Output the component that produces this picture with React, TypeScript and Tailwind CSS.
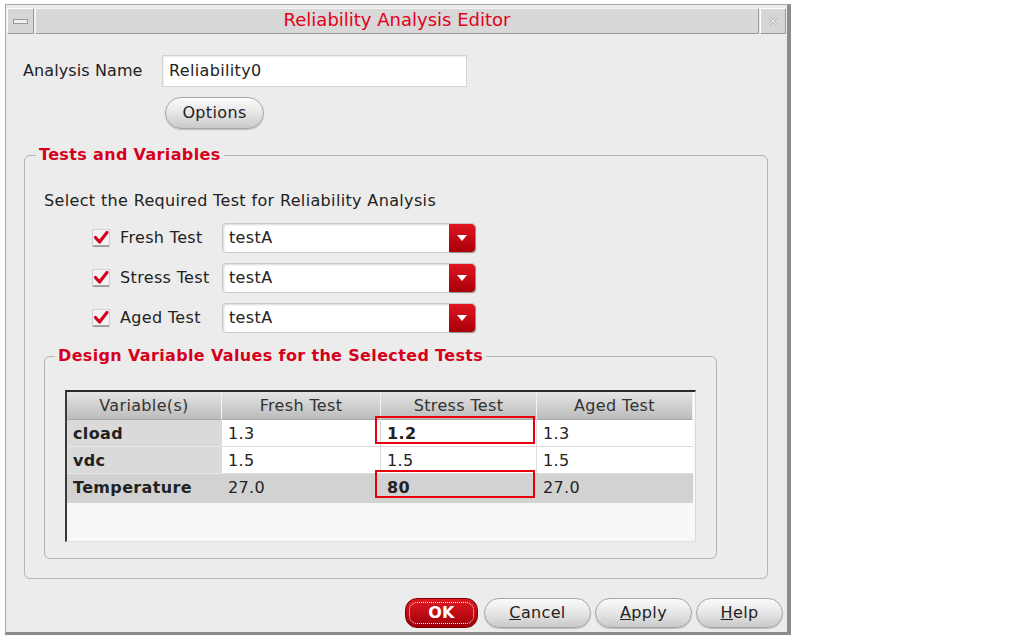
import type { ReactNode } from 'react'

const rows = [
  { name: 'cload', fresh: '1.3', stress: '1.2', aged: '1.3', boxed: true, shaded: false },
  { name: 'vdc', fresh: '1.5', stress: '1.5', aged: '1.5', boxed: false, shaded: false },
  { name: 'Temperature', fresh: '27.0', stress: '80', aged: '27.0', boxed: true, shaded: true },
]

function CheckBox() {
  return (
    <svg width="18" height="18" viewBox="0 0 18 18" className="shrink-0">
      <rect x="0.5" y="0.5" width="17" height="17" fill="#f4f4f4" stroke="#d0d0d0" />
      <line x1="1" y1="17" x2="17" y2="17" stroke="#8c8c8c" strokeWidth="1.5" />
      <path d="M3.5 8.5 L7.5 13 L15 3.5" fill="none" stroke="#d4001c" strokeWidth="3.2" strokeLinecap="round" strokeLinejoin="round" />
    </svg>
  )
}

function Combo({ value }: { value: string }) {
  return (
    <div className="flex h-[30px] w-[254px] rounded-[4px] border border-[#c8c8c8] bg-white shadow-[inset_1px_1px_2px_rgba(0,0,0,0.15)]">
      <span className="flex-1 pl-[6px] leading-[28px]">{value}</span>
      <span className="flex w-[26px] items-center justify-center rounded-r-[4px] bg-linear-to-b from-[#e0151f] to-[#a80008] shadow-[1px_1px_1px_rgba(0,0,0,0.3)]">
        <svg width="12" height="8" viewBox="0 0 12 8">
          <path d="M1 1 L11 1 L6 7 Z" fill="#fff" />
        </svg>
      </span>
    </div>
  )
}

function TestRow({ label }: { label: string }) {
  return (
    <div className="flex h-[30px] items-center">
      <div className="ml-[48px] flex w-[130px] items-center">
        <CheckBox />
        <span className="ml-[10px]">{label}</span>
      </div>
      <Combo value="testA" />
    </div>
  )
}

function Pill({ children, w, h = 'h-[30px]', red }: { children: ReactNode; w: string; h?: string; red?: boolean }) {
  if (red) {
    return (
      <button className={`${w} ${h} flex items-center justify-center rounded-[12px] border border-[#7a0000] bg-linear-to-b from-[#e01820] to-[#a00008] p-[3px]`}>
        <span className="flex h-full w-full items-center justify-center rounded-[8px] border border-dotted border-white font-bold text-white">
          {children}
        </span>
      </button>
    )
  }
  return (
    <button className={`${w} ${h} rounded-full border border-[#a6a6a6] bg-linear-to-b from-[#fbfbfb] via-[#e6e6e6] to-[#c9c9c9] text-[#222] shadow-[0_1px_1px_rgba(0,0,0,0.2)]`}>
      {children}
    </button>
  )
}

function Cell({ children, className }: { children?: ReactNode; className?: string }) {
  return <div className={`relative h-[27px] truncate px-[6px] leading-[27px] ${className ?? ''}`}>{children}</div>
}

export default function App() {
  return (
    <div className="h-[636px] w-[1013px] bg-white pl-[5px] pt-[4px] font-['DejaVu_Sans',sans-serif] text-[16px] tracking-[0.35px] text-[#222]">
      <div className="flex h-[631px] w-[786px] flex-col border-l border-t border-[#a8a8a8] border-r-[4px] border-b-[3px] border-r-[#8c8c8c] border-b-[#8c8c8c] bg-[#ececec]">
        {/* title bar */}
        <div className="mx-[1px] mt-[3px] flex h-[26px]">
          <div className="flex w-[27px] items-center justify-center border border-t-white border-l-white border-r-[#9a9a9a] border-b-[#9a9a9a] bg-[#d6d6d6]">
            <span className="h-[5px] w-[15px] border border-[#9a9a9a] bg-[#f0f0f0]" />
          </div>
          <div className="ml-[1px] flex flex-1 items-center justify-center border border-t-[#f4f4f4] border-l-[#f4f4f4] border-r-[#9a9a9a] border-b-[#9a9a9a] bg-[#d8d8d8] pb-[3px] text-[18px] tracking-normal text-[#e3001b]">
            Reliability Analysis Editor
          </div>
          <div className="ml-[1px] flex w-[26px] items-center justify-center border border-t-white border-l-white border-r-[#9a9a9a] border-b-[#9a9a9a] bg-[#d6d6d6]">
            <svg width="14" height="14" viewBox="0 0 14 14">
              <path d="M2 2 L12 12 M12 2 L2 12" stroke="#c4c4c4" strokeWidth="3" />
              <path d="M2 2 L12 12 M12 2 L2 12" stroke="#eaeaea" strokeWidth="1" />
            </svg>
          </div>
        </div>

        {/* name */}
        <div className="mt-[21px] flex items-center">
          <span className="ml-[17px] w-[139px] tracking-[0.1px]">Analysis Name</span>
          <div className="h-[32px] w-[305px] border border-[#d4d4d4] bg-white pl-[6px] leading-[30px] shadow-[inset_1px_1px_1px_rgba(0,0,0,0.08)]">
            Reliability0
          </div>
        </div>
        <div className="ml-[159px] mt-[10px]">
          <Pill w="w-[99px]" h="h-[32px]">
            Options
          </Pill>
        </div>

        {/* tests and variables */}
        <fieldset className="ml-[18px] mr-[19px] mt-[16px] rounded-[6px] border border-[#b4b4b4] pb-[19px] pl-[19px] pr-[50px]">
          <legend className="-ml-[8px] px-[3px] text-[16px] font-bold leading-[20px] text-[#d6001c]">Tests and Variables</legend>
          <div className="mt-[26px] leading-[20px]">Select the Required Test for Reliability Analysis</div>
          <div className="mt-[12px] flex flex-col gap-[10px]">
            <TestRow label="Fresh Test" />
            <TestRow label="Stress Test" />
            <TestRow label="Aged Test" />
          </div>

          <fieldset className="mt-[13px] w-[673px] rounded-[6px] border border-[#b4b4b4] px-[20px] pb-[16px]">
            <legend className="-ml-[10px] px-[3px] text-[16px] font-bold leading-[20px] text-[#d6001c]">
              Design Variable Values for the Selected Tests
            </legend>
            <div className="mt-[24px] h-[152px] w-[631px] border-l-2 border-t-2 border-l-[#3a3a3a] border-t-[#2a2a2a] border-r border-b border-r-[#d8d8d8] border-b-[#e0e0e0] bg-[#f8f8f8]">
              <div className="grid grid-cols-[155px_159px_156px_156px]">
                {['Variable(s)', 'Fresh Test', 'Stress Test', 'Aged Test'].map((h) => (
                  <div
                    key={h}
                    className="h-[28px] border-r border-b border-r-[#f2f2f2] border-b-[#a8a8a8] bg-linear-to-b from-[#e4e4e4] to-[#bcbcbc] text-center leading-[27px] text-[#333]"
                  >
                    {h}
                  </div>
                ))}
                {rows.map((r) => (
                  <div key={r.name} className="contents">
                    <Cell className={`font-bold ${r.shaded ? 'h-[29px] bg-[#d2d2d2]' : 'bg-[#dadada] border-b border-[#e8e8e8]'}`}>{r.name}</Cell>
                    <Cell className={r.shaded ? 'h-[29px] bg-[#d2d2d2]' : 'border-b border-r border-[#dcdcdc] bg-white'}>{r.fresh}</Cell>
                    <Cell className={`${r.boxed ? 'font-bold' : ''} ${r.shaded ? 'h-[29px] bg-[#d2d2d2]' : 'border-b border-r border-[#dcdcdc] bg-white'} overflow-visible`}>
                      {r.stress}
                      {r.boxed && (
                        <span className="pointer-events-none absolute left-[-6px] top-[-4px] h-[28px] w-[160px] border-2 border-[#e8000e]" />
                      )}
                    </Cell>
                    <Cell className={r.shaded ? 'h-[29px] bg-[#d2d2d2]' : 'border-b border-[#dcdcdc] bg-white'}>{r.aged}</Cell>
                  </div>
                ))}
              </div>
            </div>
          </fieldset>
        </fieldset>

        {/* buttons */}
        <div className="mt-auto mb-[4px] mr-[4px] flex justify-end">
          <Pill w="w-[73px]" red>
            OK
          </Pill>
          <span className="ml-[6px]">
            <Pill w="w-[107px]">
              <u>C</u>ancel
            </Pill>
          </span>
          <span className="ml-[4px]">
            <Pill w="w-[97px]">
              <u>A</u>pply
            </Pill>
          </span>
          <span className="ml-[4px]">
            <Pill w="w-[87px]">
              <u>H</u>elp
            </Pill>
          </span>
        </div>
      </div>
    </div>
  )
}
